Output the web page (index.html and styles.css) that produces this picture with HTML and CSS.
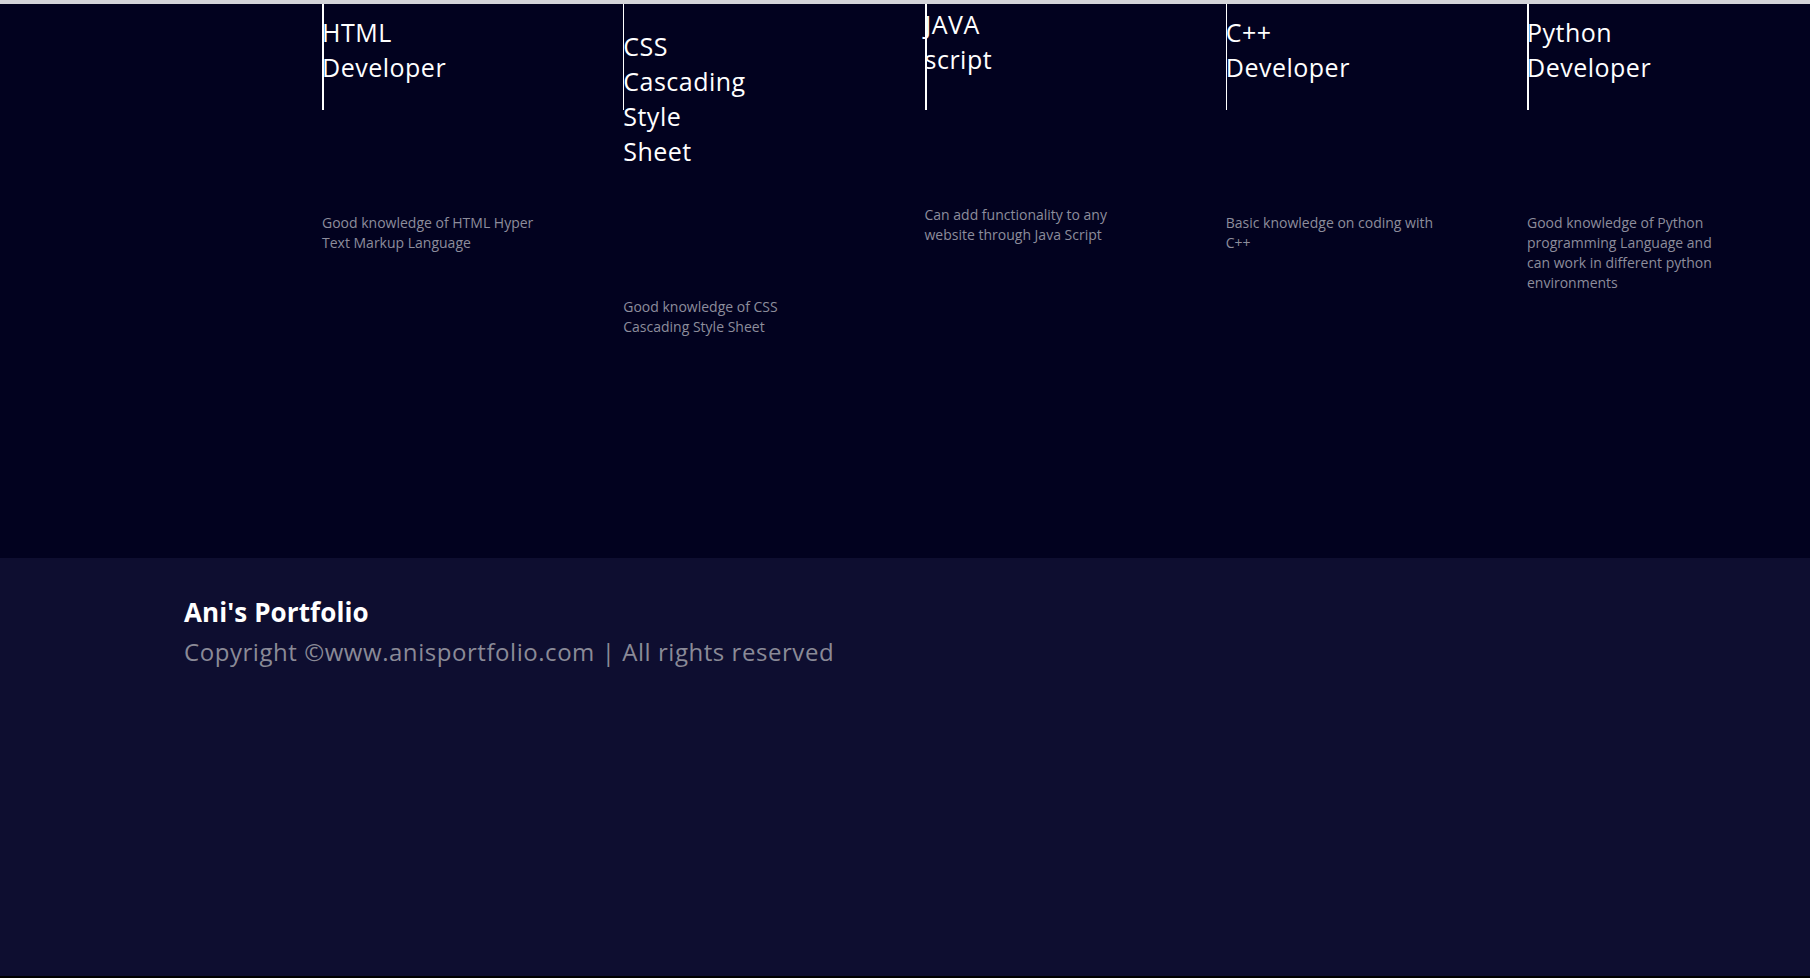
FILE: index.html
```html
<!DOCTYPE html>
<html lang="en">
<head>
<meta charset="utf-8">
<title>Ani's Portfolio</title>
<link rel="stylesheet" href="styles.css">
</head>
<body>
<div class="page">
  <div class="topbar"></div>
  <section class="skills">
    <div class="skills-grid">
      <article class="card">
        <h3 class="card-title">HTML Developer</h3>
        <p class="card-text">Good knowledge of HTML Hyper Text Markup Language</p>
      </article>
      <article class="card card--thin card--low">
        <h3 class="card-title">CSS Cascading Style Sheet</h3>
        <p class="card-text">Good knowledge of CSS Cascading Style Sheet</p>
      </article>
      <article class="card card--high">
        <h3 class="card-title">JAVA script</h3>
        <p class="card-text">Can add functionality to any website through Java Script</p>
      </article>
      <article class="card card--thin">
        <h3 class="card-title">C++ Developer</h3>
        <p class="card-text">Basic knowledge on coding with C++</p>
      </article>
      <article class="card card--narrow">
        <h3 class="card-title">Python Developer</h3>
        <p class="card-text">Good knowledge of Python programming Language and can work in different python environments</p>
      </article>
    </div>
  </section>
  <footer class="footer">
    <h2 class="footer-title">Ani's Portfolio</h2>
    <p class="footer-copy">Copyright ©www.anisportfolio.com | All rights reserved</p>
  </footer>
</div>
</body>
</html>
```

FILE: styles.css
```css
html, body {
  margin: 0;
  padding: 0;
  background: #000;
}

body {
  font-family: "Open Sans", "Noto Sans", sans-serif;
  overflow: hidden;
}

.page {
  width: 1810px;
  height: 976px;
  display: flex;
  flex-direction: column;
  overflow: hidden;
}

.topbar {
  height: 4px;
  background: #d4d4d9;
  flex: none;
}

.skills {
  height: 554px;
  flex: none;
  background: #02021f;
  overflow: hidden;
}

.skills-grid {
  display: grid;
  grid-template-columns: repeat(5, 301.25px);
  padding-left: 322px;
}

.card {
  position: relative;
  display: flex;
  flex-direction: column;
  align-items: flex-start;
  padding-top: 10.5px;
}

.card::before {
  content: "";
  position: absolute;
  left: 0;
  top: 0;
  width: 2px;
  height: 106px;
  background: #ffffff;
}

.card--thin::before {
  width: 1px;
}

.card--low {
  padding-top: 24.5px;
}

.card--high {
  padding-top: 3px;
}

.card-title {
  margin: 0;
  width: min-content;
  font-size: 25px;
  font-weight: 400;
  line-height: 35px;
  letter-spacing: 0.5px;
  color: #ffffff;
}

.card-text {
  margin: 128px 0 0;
  width: 216px;
  font-size: 14px;
  line-height: 20px;
  color: #8d8d9c;
}

.card--narrow .card-text {
  width: 209px;
}

.footer {
  flex: 1;
  background: #0e0e30;
  padding: 36px 0 0 184px;
  display: flex;
  flex-direction: column;
  gap: 4px;
}

.footer-title {
  margin: 0;
  font-size: 26px;
  font-weight: 700;
  line-height: 36px;
  letter-spacing: 0.1px;
  color: #ffffff;
}

.footer-copy {
  margin: 0;
  font-size: 24px;
  line-height: 36px;
  letter-spacing: 0.55px;
  color: #8a8a97;
}
```
